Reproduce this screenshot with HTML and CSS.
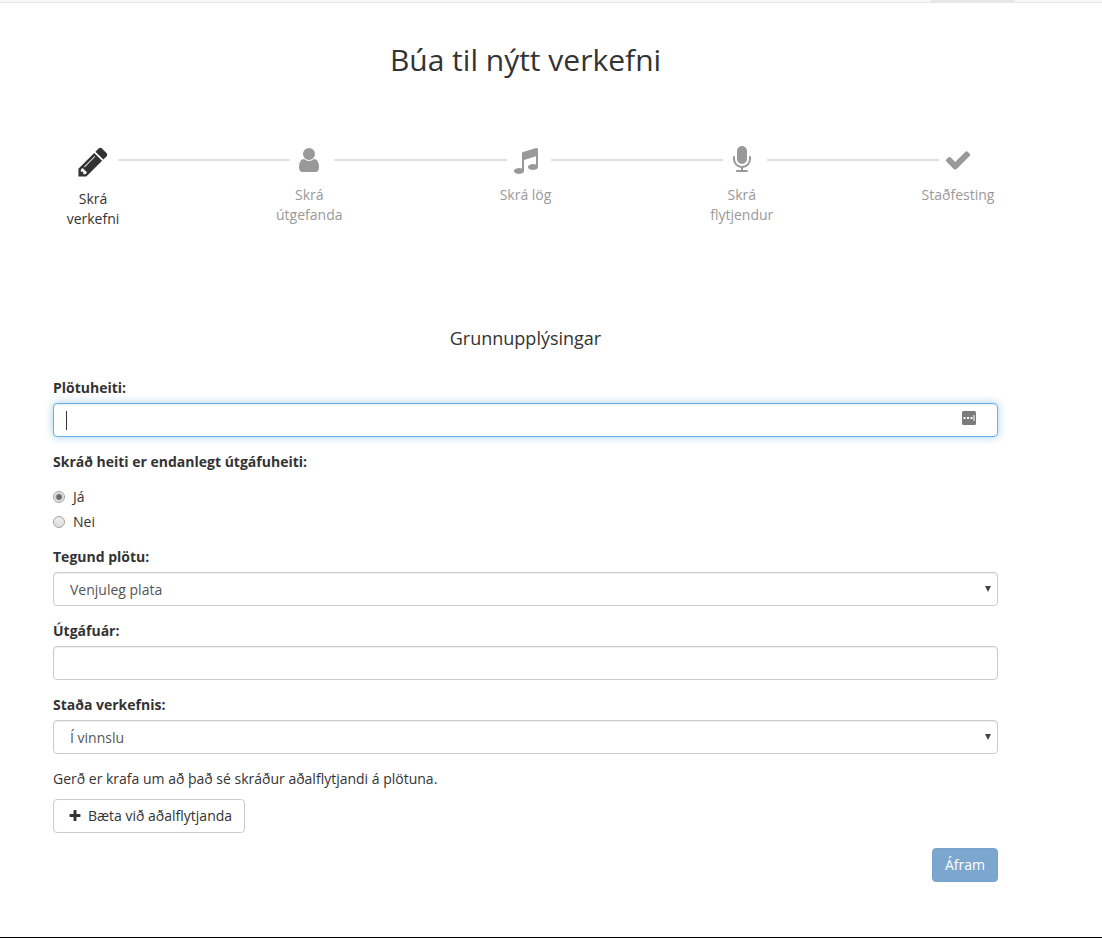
FILE: index.html
```html
<!DOCTYPE html>
<html lang="is">
<head>
<meta charset="utf-8">
<meta name="viewport" content="width=device-width, initial-scale=1">
<title>Búa til nýtt verkefni</title>
<link rel="stylesheet" href="styles.css">
</head>
<body>
<div class="page">
  <header class="navbar"><div class="navbar-active"></div></header>
  <main class="content">
    <h1 class="title">Búa til nýtt verkefni</h1>

    <ol class="steps">
      <li class="step step-active">
        <svg class="step-icon" viewBox="0 0 1792 1792" aria-hidden="true"><path d="M491 1536l91-91-235-235-91 91v107h128v128h107zm523-928q0-22-22-22-10 0-17 7l-542 542q-7 7-7 17 0 22 22 22 10 0 17-7l542-542q7-7 7-17zm-54-192l416 416-832 832h-416v-416zm683 96q0 53-37 90l-166 166-416-416 166-165q36-38 90-38 53 0 91 38l235 234q37 39 37 91z"/></svg>
        <span class="step-label">Skrá verkefni</span>
      </li>
      <li class="step-line" role="presentation"></li>
      <li class="step">
        <svg class="step-icon" viewBox="0 0 1792 1792" aria-hidden="true"><path d="M1536 1399q0 109-62.500 187t-150.500 78h-854q-88 0-150.500-78t-62.500-187q0-85 8.500-160.500t31.500-152 58.500-131 94-89 134.500-34.500q131 128 313 128t313-128q76 0 134.500 34.500t94 89 58.500 131 31.500 152 8.500 160.500zm-256-887q0 159-112.500 271.500t-271.500 112.500-271.500-112.500-112.500-271.500 112.500-271.500 271.500-112.500 271.500 112.500 112.500 271.500z"/></svg>
        <span class="step-label">Skrá útgefanda</span>
      </li>
      <li class="step-line" role="presentation"></li>
      <li class="step">
        <svg class="step-icon" viewBox="0 0 1792 1792" aria-hidden="true"><path d="M1664 224v1120q0 50-34 89t-86 60.500-103.500 32-96.500 10.500-96.500-10.500-103.500-32-86-60.500-34-89 34-89 86-60.500 103.500-32 96.500-10.500q105 0 192 39v-537l-768 237v709q0 50-34 89t-86 60.500-103.500 32-96.500 10.500-96.500-10.500-103.500-32-86-60.500-34-89 34-89 86-60.500 103.500-32 96.500-10.500q105 0 192 39v-967q0-31 19-56.500t49-35.500l832-256q12-4 28-4 40 0 68 28t28 68z"/></svg>
        <span class="step-label">Skrá lög</span>
      </li>
      <li class="step-line" role="presentation"></li>
      <li class="step">
        <svg class="step-icon" viewBox="0 0 1792 1792" aria-hidden="true"><path d="M1472 704v128q0 221-147.500 384.500t-364.500 187.500v132h256q26 0 45 19t19 45-19 45-45 19h-640q-26 0-45-19t-19-45 19-45 45-19h256v-132q-217-24-364.500-187.500t-147.500-384.500v-128q0-26 19-45t45-19 45 19 19 45v128q0 185 131.500 316.500t316.500 131.500 316.500-131.500 131.500-316.500v-128q0-26 19-45t45-19 45 19 19 45zm-256-384v512q0 132-94 226t-226 94-226-94-94-226v-512q0-132 94-226t226-94 226 94 94 226z"/></svg>
        <span class="step-label">Skrá flytjendur</span>
      </li>
      <li class="step-line" role="presentation"></li>
      <li class="step">
        <svg class="step-icon" viewBox="0 0 1792 1792" aria-hidden="true"><path d="M1671 566q0 40-28 68l-724 724-136 136q-28 28-68 28t-68-28l-136-136-362-362q-28-28-28-68t28-68l136-136q28-28 68-28t68 28l294 295 656-657q28-28 68-28t68 28l136 136q28 28 28 68z"/></svg>
        <span class="step-label">Staðfesting</span>
      </li>
    </ol>

    <form class="form">
      <h2 class="subtitle">Grunnupplýsingar</h2>

      <div class="group">
        <label class="label" for="album">Plötuheiti:</label>
        <div class="control-wrap">
          <input class="control control-focus" id="album" type="text">
          <span class="caret"></span>
          <svg class="autofill" viewBox="0 0 14 14" aria-hidden="true"><rect width="14" height="14" rx="1.500" fill="#7b7b7b"/><path d="M1.500 6h2v2h-2zM5 6h2v2H5zM8.500 6h2v2h-2zM11.500 4h1v6h-1z" fill="#fff"/></svg>
        </div>
      </div>

      <fieldset class="group radios">
        <legend class="label">Skráð heiti er endanlegt útgáfuheiti:</legend>
        <label class="radio"><input class="radio-input" type="radio" name="final" checked>Já</label>
        <label class="radio"><input class="radio-input" type="radio" name="final">Nei</label>
      </fieldset>

      <div class="group">
        <label class="label" for="type">Tegund plötu:</label>
        <div class="control-wrap">
          <select class="control select" id="type"><option>Venjuleg plata</option></select>
          <svg class="arrow" viewBox="0 0 6 6" aria-hidden="true"><path d="M0 0h6L3 6z"/></svg>
        </div>
      </div>

      <div class="group">
        <label class="label" for="year">Útgáfuár:</label>
        <input class="control" id="year" type="text">
      </div>

      <div class="group">
        <label class="label" for="status">Staða verkefnis:</label>
        <div class="control-wrap">
          <select class="control select" id="status"><option>Í vinnslu</option></select>
          <svg class="arrow" viewBox="0 0 6 6" aria-hidden="true"><path d="M0 0h6L3 6z"/></svg>
        </div>
      </div>

      <p class="note">Gerð er krafa um að það sé skráður aðalflytjandi á plötuna.</p>
      <button class="btn btn-default" type="button">
        <svg class="plus" viewBox="0 0 1792 1792" aria-hidden="true"><path d="M1600 736v192q0 40-28 68t-68 28h-416v416q0 40-28 68t-68 28h-192q-40 0-68-28t-28-68v-416h-416q-40 0-68-28t-28-68v-192q0-40 28-68t68-28h416v-416q0-40 28-68t68-28h192q40 0 68 28t28 68v416h416q40 0 68 28t28 68z"/></svg>
        Bæta við aðalflytjanda
      </button>
      <div class="actions"><button class="btn btn-primary" type="submit">Áfram</button></div>
    </form>
  </main>
</div>
</body>
</html>
```

FILE: styles.css
```css
*, *::before, *::after { box-sizing: border-box; }

body {
  margin: 0;
  background: #fff;
  color: #333;
  font: 14px/20px "Open Sans", "Noto Sans", sans-serif;
}

.page {
  display: flex;
  flex-direction: column;
  min-height: 100vh;
  border-bottom: 1px solid #000;
}

.navbar {
  display: flex;
  justify-content: flex-end;
  height: 3px;
  padding-right: 87px;
  background: #f8f8f8;
  border-bottom: 1px solid #e7e7e7;
}

.navbar-active { width: 84px; background: #e7e7e7; }

.content { padding: 40px 104px 55px 53px; }

.title {
  margin: 0 0 69px;
  font-size: 30px;
  font-weight: 400;
  line-height: 33px;
  text-align: center;
}

.steps {
  display: flex;
  margin: 0;
  padding: 0;
  list-style: none;
}

.step {
  display: flex;
  flex: none;
  flex-direction: column;
  align-items: center;
  gap: 10px;
  width: 80px;
  color: #999;
  text-align: center;
}

.step-active { color: #333; }

.step-icon {
  width: 30px;
  height: 30px;
  padding: 1px;
  fill: currentColor;
}

.step-active .step-icon { width: 34px; height: 34px; padding: 0; }

.step-line {
  flex: 1;
  height: 2px;
  margin: 14px -21px 0 -15px;
  background: #e0e0e0;
}

.subtitle {
  margin: 99px 0 30px;
  font-size: 18px;
  font-weight: 400;
  line-height: 20px;
  text-align: center;
}

.group { margin: 0 0 15px; }

.label {
  display: block;
  margin-bottom: 5px;
  padding: 0;
  font-weight: 700;
}

.control-wrap { position: relative; }

.control {
  display: block;
  width: 100%;
  height: 34px;
  margin: 0;
  padding: 6px 12px;
  border: 1px solid #ccc;
  border-radius: 4px;
  outline: 0;
  background: #fff;
  box-shadow: inset 0 1px 1px rgba(0, 0, 0, .075);
  color: #555;
  font: inherit;
}

.control-focus {
  border-color: #66afe9;
  box-shadow: inset 0 1px 1px rgba(0, 0, 0, .075), 0 0 8px rgba(102, 175, 233, .6);
  caret-color: transparent;
}

.caret {
  position: absolute;
  top: 8px;
  left: 13px;
  width: 1px;
  height: 19px;
  background: #333;
}

.autofill {
  position: absolute;
  top: 8px;
  right: 22px;
  width: 14px;
  height: 14px;
}

.select {
  padding: 7px 16px 5px;
  appearance: none;
}

.arrow {
  position: absolute;
  top: 14px;
  right: 7px;
  width: 6px;
  height: 6px;
  fill: #444;
  pointer-events: none;
}

.radios { padding: 0; border: 0; }

.radios .label { margin-bottom: 15px; }

.radio {
  display: flex;
  align-items: center;
  gap: 8px;
  margin-bottom: 5px;
}

.radio:last-child { margin-bottom: 0; }

.radio-input {
  width: 12px;
  height: 12px;
  margin: 0;
  border: 1px solid #a3a3a3;
  border-radius: 50%;
  appearance: none;
  background: linear-gradient(#eee, #ddd);
}

.radio-input:checked {
  background: radial-gradient(circle, #666 0 2px, #e6e6e6 4px);
}

.note { margin: 0 0 10px; }

.btn {
  display: inline-flex;
  align-items: center;
  height: 34px;
  margin: 0;
  padding: 6px 12px;
  border: 1px solid #ccc;
  border-radius: 4px;
  background: #fff;
  color: #333;
  font: inherit;
  white-space: nowrap;
}

.btn-default { gap: 6px; padding-left: 14px; }

.plus { width: 14px; height: 14px; fill: currentColor; }

.actions {
  display: flex;
  justify-content: flex-end;
  margin-top: 15px;
}

.btn-primary {
  border-color: #77a1c7;
  background: #7ba7cf;
  color: #fff;
}
```
